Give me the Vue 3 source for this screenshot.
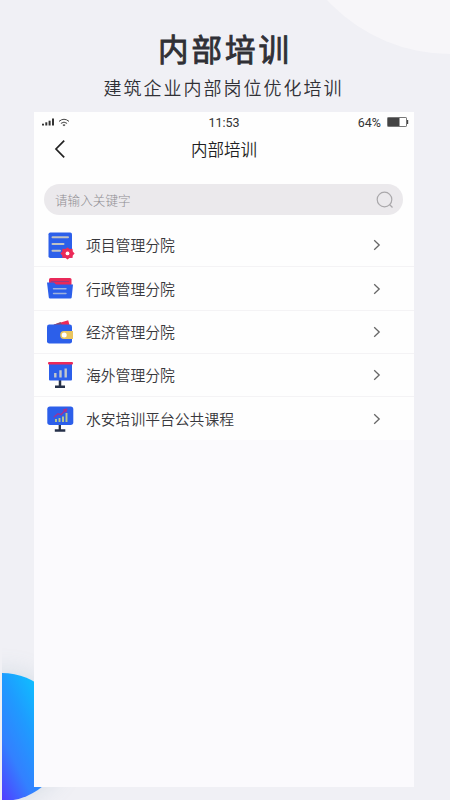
<script setup>
const items = [
  { icon: 'project', label: '项目管理分院' },
  { icon: 'folder', label: '行政管理分院' },
  { icon: 'wallet', label: '经济管理分院' },
  { icon: 'board', label: '海外管理分院' },
  { icon: 'monitor', label: '水安培训平台公共课程' },
]
</script>

<template>
  <main class="page">
    <div class="arc"></div>
    <div class="disc-clip"><div class="disc"></div></div>
    <header class="promo">
      <h1>内部培训</h1>
      <p>建筑企业内部岗位优化培训</p>
    </header>
    <section class="phone">
      <div class="top">
        <div class="status">
          <div class="signal">
            <svg width="13" height="8" viewBox="0 0 13 8" fill="#333">
              <rect x="0" y="5.7" width="2" height="1.8" /><rect x="3.3" y="4.3" width="2" height="3.2" />
              <rect x="6.6" y="2.7" width="2" height="4.8" /><rect x="10" y="0.5" width="2" height="7" />
            </svg>
            <svg width="12" height="9" viewBox="0 0 12 9" fill="none" stroke="#444" stroke-width="1">
              <path d="M1 3.4Q6-.9 11 3.4M2.9 5.4Q6 2.8 9.1 5.4" /><path d="M4.5 6.9Q6 5.7 7.5 6.9L6 8.3Z" fill="#444" stroke="none" />
            </svg>
          </div>
          <span class="time">11:53</span>
          <div class="power">
            <span>64%</span>
            <svg width="22" height="10" viewBox="0 0 22 10">
              <rect x=".5" y=".5" width="19" height="9" rx=".6" fill="#fff" stroke="#777" />
              <rect x="1" y="1" width="11.5" height="8" fill="#444" /><rect x="20" y="3" width="1.2" height="4" fill="#444" />
            </svg>
          </div>
        </div>
        <nav class="nav">
          <svg class="back" width="12" height="20" viewBox="0 0 12 20" fill="none" stroke="#222" stroke-width="1.7"><path d="M10.2 1.7 2 10l8.2 8.3" /></svg>
          <h2>内部培训</h2>
        </nav>
        <div class="search">
          <span>请输入关键字</span>
          <svg width="18" height="18" viewBox="0 0 18 18" fill="none" stroke="#aaa8ab" stroke-width="1.2"><circle cx="8.5" cy="8.5" r="7.3" /><path d="m13.5 13.5 3 3" /></svg>
        </div>
      </div>
      <ul class="list">
        <li v-for="item in items" :key="item.icon">
          <svg class="icon" width="30" height="30" viewBox="0 0 30 30">
            <g v-if="item.icon === 'project'">
              <rect x="3.5" y="2.5" width="23.5" height="25.5" rx="1.8" fill="#2c5fea" />
              <path d="M7.5 7.2H23M7.5 14h11M7.5 20.7h7.5" stroke="#c0c2c4" stroke-width="2" stroke-linecap="round" />
              <path d="m22.5 17.4 2.2 1.7 2.8-.3.3 2.7 1.8 1.9-1.8 2-.3 2.7-2.8-.3-2.2 1.7-2.2-1.7-2.8.3-.3-2.7-1.8-2 1.8-1.9.3-2.7 2.8.3Z" fill="#ec2a58" />
              <circle cx="22.5" cy="23.4" r="1.9" fill="#fff" />
            </g>
            <g v-else-if="item.icon === 'folder'">
              <path d="M4 5.5Q4 4 5.5 4h19.5q1.5 0 1.5 1.5V12H4Z" fill="#e92959" />
              <path d="M6 7.5h18" stroke="#9d397f" stroke-width="1" />
              <path d="M2 8.5h7l2 2h17l-1.3 13Q26.5 24.5 25.5 24.5H5Q4 24.5 3.8 23.5Z" fill="#2c5fea" />
              <path d="M8.5 14.7h12.5M8.5 19.5h12.5" stroke="#9fb2dc" stroke-width="1.4" stroke-linecap="round" />
            </g>
            <g v-else-if="item.icon === 'wallet'">
              <path d="M9 7.5 23.2 3.3l1.4 5.2H9Z" fill="#ec2a58" />
              <path d="M7 8.5 15.5 5l2 3.5Z" fill="#8b496b" />
              <rect x="2" y="7.5" width="25" height="19" rx="2.3" fill="#2c5fea" />
              <path d="M19 14h9v8h-9q-3.8-.2-3.8-4T19 14Z" fill="#e8c45f" />
              <circle cx="19.2" cy="18" r="2.5" fill="#fff" />
            </g>
            <g v-else-if="item.icon === 'board'">
              <path d="M15 20v6.5M10 26.8h10" stroke="#263149" stroke-width="2.5" />
              <rect x="4" y="3" width="23" height="17.5" rx="1" fill="#2c5fea" />
              <rect x="3" y="2" width="25" height="2.6" rx="1" fill="#ec2a58" />
              <path d="M10.3 17.5V13M15.5 17.5v-7.2M20.7 17.5v-9" stroke="#c1c7cd" stroke-width="2.4" />
            </g>
            <g v-else>
              <path d="M14.8 21v6M9.8 26.5h10.5" stroke="#263149" stroke-width="2.3" />
              <rect x="2.3" y="2.5" width="26" height="18.5" rx="2.7" fill="#2c5fea" />
              <path d="M11 18v-3M14.5 18v-4M18 18v-5.5M21.5 18V9" stroke="#b9c98f" stroke-width="1.9" />
              <path d="M8.8 13.2 13 9.8l3.1.8L21 5.6M18.1 5.9l3.4-.8-.7 3.3" fill="none" stroke="#a53191" stroke-width="1.4" />
            </g>
          </svg>
          <span class="label">{{ item.label }}</span>
          <svg width="8" height="12" viewBox="0 0 8 12" fill="none" stroke="#666" stroke-width="1.3"><path d="m1.2 1.2 5 4.8-5 4.8" /></svg>
        </li>
      </ul>
    </section>
  </main>
</template>

<style scoped>
.page {
  position: relative;
  width: 450px;
  height: 800px;
  overflow: hidden;
  background: #f0f0f5;
  font-family: "Noto Sans CJK SC", sans-serif;
}
.arc {
  position: absolute;
  left: 283px;
  top: -280px;
  width: 334px;
  height: 334px;
  border-radius: 50%;
  background: #f7f6f9;
}
.disc-clip {
  position: absolute;
  left: 2px;
  top: 640px;
  width: 120px;
  height: 160px;
  overflow: hidden;
}
.disc {
  position: absolute;
  left: -64px;
  top: 33px;
  width: 128px;
  height: 128px;
  border-radius: 50%;
  background: linear-gradient(63deg, #5040ff 34%, #3380ff 50%, #1f9bff 66%, #10bcff 81%);
  box-shadow: 0 0 24px rgba(120, 155, 180, 0.25);
}
.promo {
  position: relative;
  height: 112px;
  box-sizing: border-box;
  padding-top: 26px;
  text-align: center;
}
h1, h2, p { margin: 0; }
h1 {
  font-size: 30.5px;
  line-height: 44px;
  font-weight: 400;
  -webkit-text-stroke: 0.9px #303036;
  letter-spacing: 3px;
  color: #303036;
}
.promo p {
  margin: 3px 3px 0 0;
  font-size: 18px;
  line-height: 28px;
  letter-spacing: 2px;
  font-weight: 350;
  color: #303036;
}
.phone {
  position: relative;
  width: 380px;
  height: 675px;
  margin-left: 34px;
  background: #fbfafd;
}
.top { height: 112px; background: #fefefe; }
.status {
  display: grid;
  grid-template-columns: 1fr auto 1fr;
  align-items: center;
  height: 20px;
  padding: 0 5px 0 8px;
  font-family: Roboto, sans-serif;
  font-size: 12.5px;
  color: #333;
}
.time { margin-right: 3px; }
.signal { display: flex; align-items: center; gap: 3px; }
.power { display: flex; justify-content: flex-end; align-items: center; gap: 6px; }
.nav {
  display: grid;
  grid-template-columns: 40px 1fr 40px;
  align-items: center;
  height: 34px;
}
.back { margin-left: 20px; }
h2 {
  font-size: 16.5px;
  line-height: 24px;
  font-weight: 350;
  color: #1f1f23;
  text-align: center;
}
.search {
  display: flex;
  align-items: center;
  justify-content: space-between;
  width: 359px;
  height: 31px;
  box-sizing: border-box;
  margin: 18px 0 0 10px;
  padding: 0 9px 0 11px;
  border-radius: 16px;
  background: #ebe9ec;
  font-size: 12.6px;
  font-weight: 300;
  color: #8f8d92;
}
.list {
  margin: 0;
  padding: 0;
  list-style: none;
}
.list li {
  display: flex;
  align-items: center;
  height: 43.3px;
  box-sizing: border-box;
  padding: 0.6px 33px 0 11px;
  border-bottom: 1px solid #f4f3f5;
  background: #fefefe;
}
.list li:last-child { border-bottom-color: #fefefe; }
.label {
  flex: 1;
  margin-left: 11px;
  font-size: 14.8px;
  font-weight: 350;
  line-height: 22px;
  color: #38383c;
}
</style>

<style>
body { margin: 0; }
</style>
